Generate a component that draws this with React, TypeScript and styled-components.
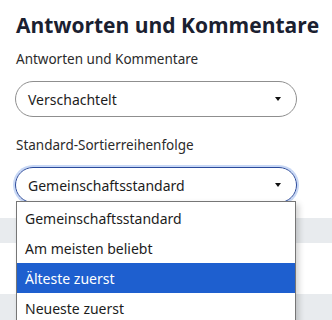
import React from 'react';
import styled, { createGlobalStyle } from 'styled-components';

const GlobalStyle = createGlobalStyle`
  html, body {
    margin: 0;
    padding: 0;
    background: #ffffff;
  }
  body {
    font-family: "Noto Sans", "Open Sans", Arial, sans-serif;
    overflow: hidden;
  }
`;

const Page = styled.div`
  position: relative;
  width: 332px;
  height: 320px;
  overflow: hidden;
  background: #ffffff;
`;

const Section = styled.div`
  padding: 11px 16px 0 16px;
  display: flex;
  flex-direction: column;
`;

const Title = styled.h1`
  margin: 0;
  font-family: "Open Sans", "Noto Sans", sans-serif;
  font-weight: 700;
  font-size: 21px;
  line-height: 28px;
  color: #1a2030;
  white-space: nowrap;
`;

const Label = styled.div<{ $gap: number }>`
  margin-top: ${(p) => p.$gap}px;
  font-size: 13.5px;
  line-height: 20px;
  color: #2b2b2b;
`;

const SelectBox = styled.div<{ $focused?: boolean }>`
  position: relative;
  margin-top: 12px;
  width: 282px;
  height: 36px;
  box-sizing: border-box;
  border-radius: 18px;
  display: flex;
  align-items: center;
  justify-content: space-between;
  padding: 0 15px 0 12px;
  font-size: 14px;
  color: #1c1c1c;
  margin-left: -1px;
  border: ${(p) => (p.$focused ? '1.5px solid #2a4a9c' : '1px solid #8f8f8f')};
  box-shadow: ${(p) => (p.$focused ? '0 0 0 2px #c7d7f5' : 'none')};
`;

const Caret = styled.span`
  width: 0;
  height: 0;
  border-left: 3.5px solid transparent;
  border-right: 3.5px solid transparent;
  border-top: 4px solid #111;
`;

const Band = styled.div<{ $h: number; $gray?: boolean }>`
  height: ${(p) => p.$h}px;
  background: ${(p) => (p.$gray ? '#e8ebee' : '#ffffff')};
`;

const ListBox = styled.ul`
  position: absolute;
  left: 16px;
  top: 201px;
  width: 280px;
  margin: 0;
  padding: 1px 0 0 0;
  list-style: none;
  box-sizing: border-box;
  border: 1px solid #767676;
  background: #ffffff;
  box-shadow: 3px 3px 6px rgba(0, 0, 0, 0.18);
`;

const Option = styled.li<{ $active?: boolean }>`
  height: 30px;
  display: flex;
  align-items: center;
  padding-left: 8px;
  font-size: 14px;
  color: ${(p) => (p.$active ? '#ffffff' : '#1c1c1c')};
  background: ${(p) => (p.$active ? '#1e5fcf' : 'transparent')};
`;

const options = ['Gemeinschaftsstandard', 'Am meisten beliebt', 'Älteste zuerst', 'Neueste zuerst'];

export default function App() {
  return (
    <Page>
      <GlobalStyle />
      <Section>
        <Title>Antworten und Kommentare</Title>
        <Label $gap={10}>Antworten und Kommentare</Label>
        <SelectBox>
          <span>Verschachtelt</span>
          <Caret />
        </SelectBox>
        <Label $gap={18}>Standard-Sortierreihenfolge</Label>
        <SelectBox $focused>
          <span>Gemeinschaftsstandard</span>
          <Caret />
        </SelectBox>
      </Section>
      <Band $h={15} />
      <Band $h={25} $gray />
      <Band $h={51} />
      <Band $h={30} $gray />
      <ListBox>
        {options.map((o, i) => (
          <Option key={o} $active={i === 2}>
            {o}
          </Option>
        ))}
      </ListBox>
    </Page>
  );
}
